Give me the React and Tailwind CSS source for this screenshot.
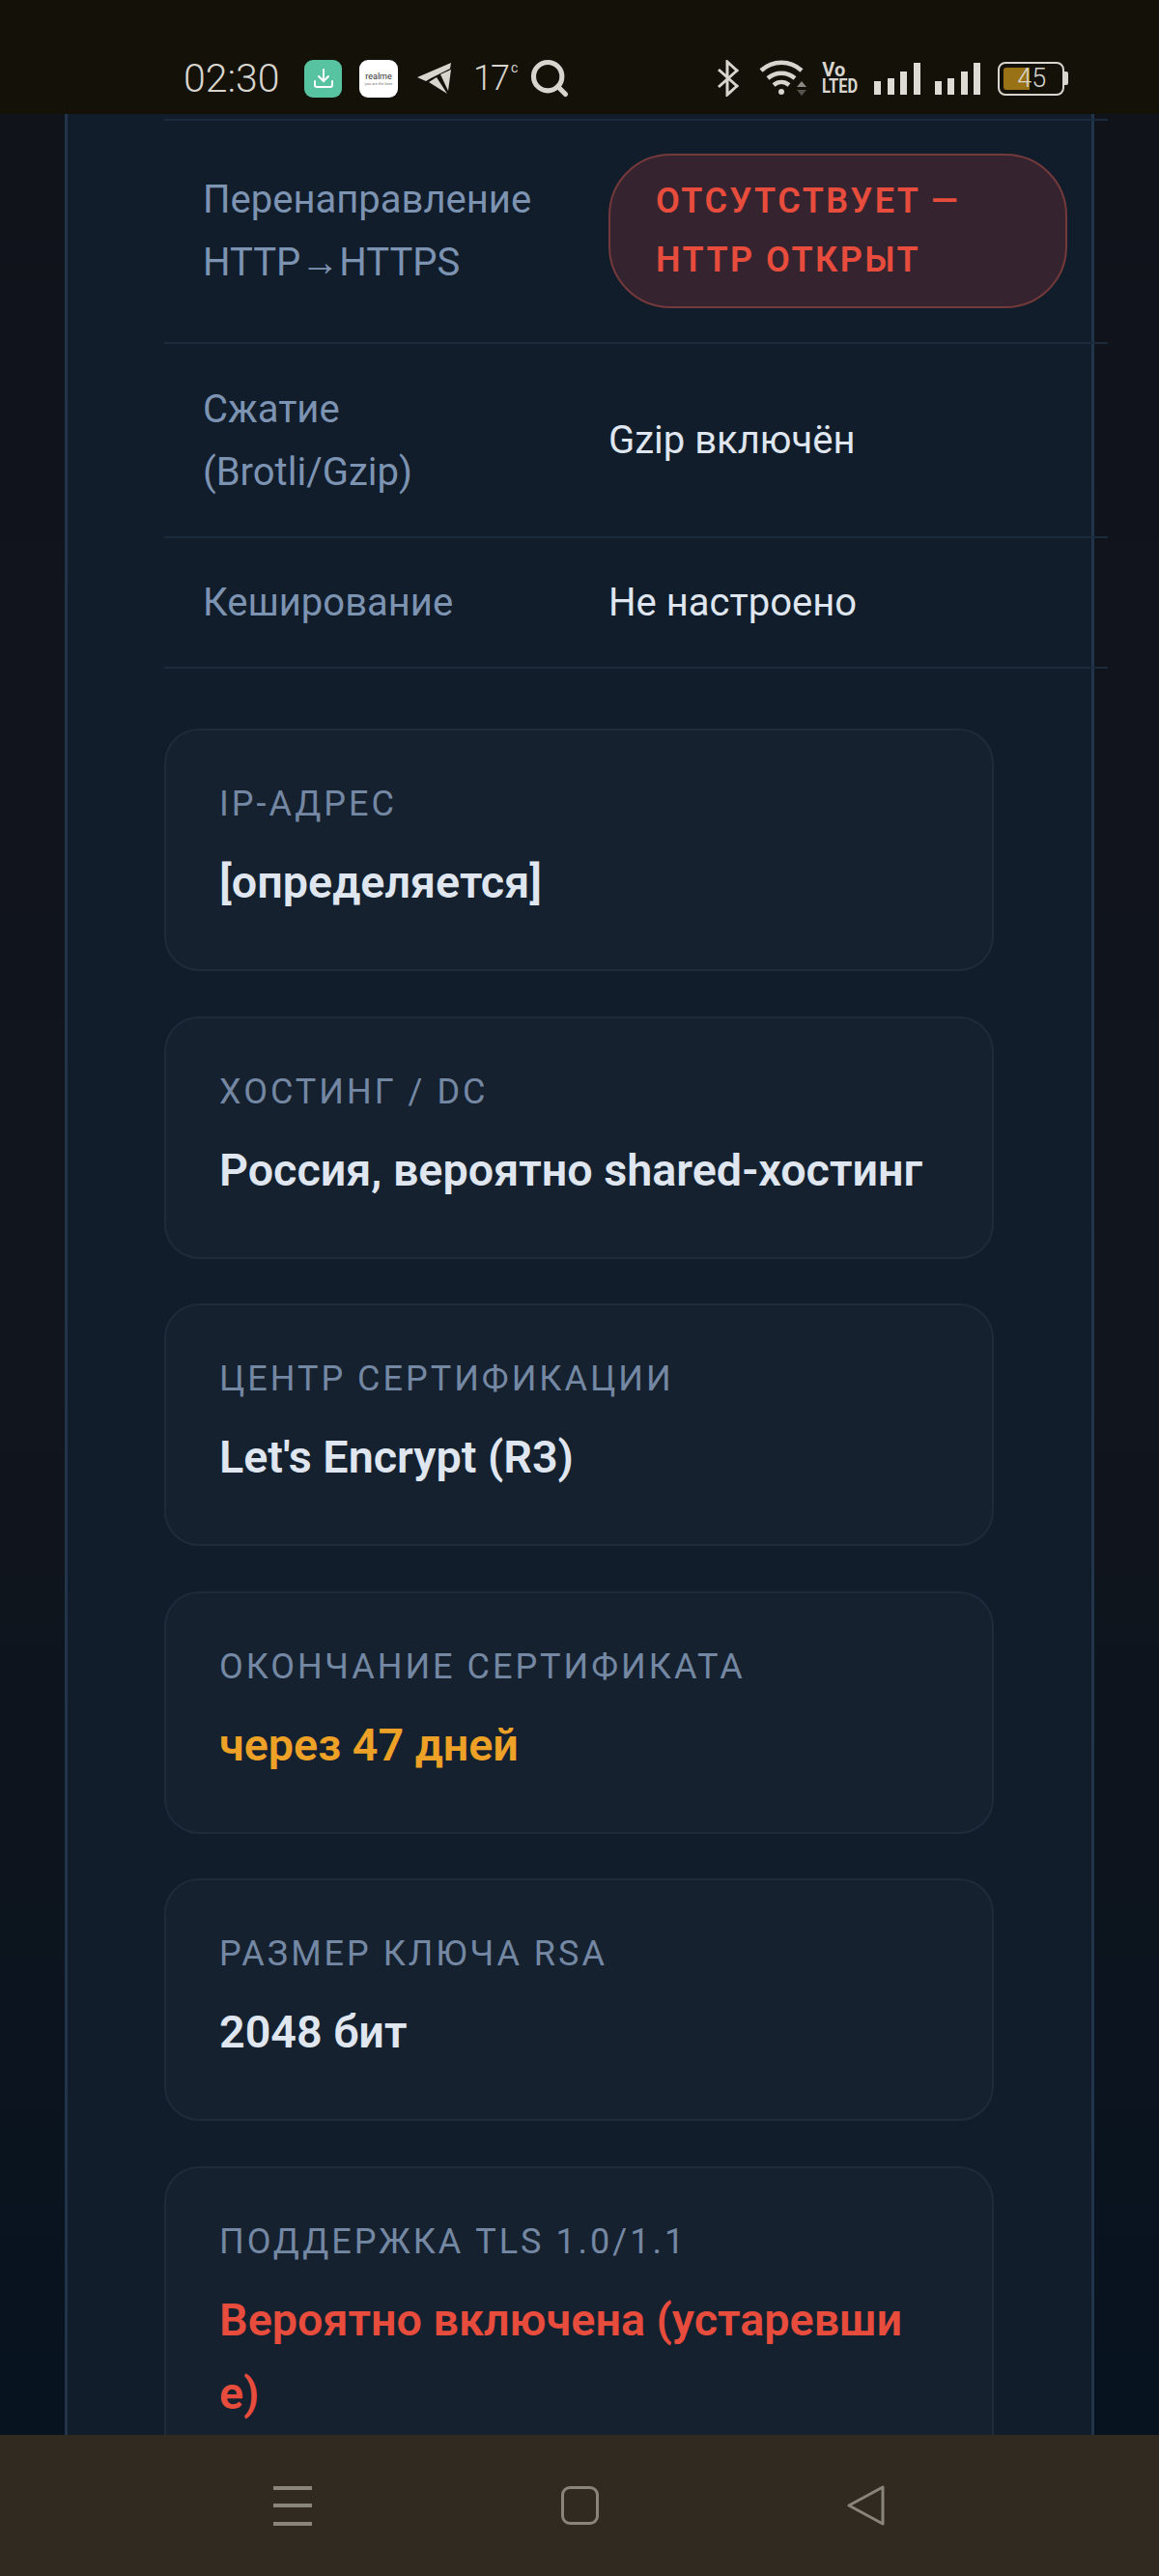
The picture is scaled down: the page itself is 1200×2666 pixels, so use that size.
import { Search, Download } from 'lucide-react'

const rowLabel = 'w-[460px] shrink-0 pl-[40px] pr-[60px] text-[40px] leading-[65px] text-[#7d93b2]'
const rowValue = 'text-[40px] leading-[65px] text-[#dfe6ef]'

const cards = [
  { label: 'IP-адрес', value: '[определяется]', color: 'text-[#dfe6ef]' },
  { label: 'Хостинг / DC', value: 'Россия, вероятно shared-хостинг', color: 'text-[#dfe6ef]' },
  { label: 'Центр сертификации', value: "Let's Encrypt (R3)", color: 'text-[#dfe6ef]' },
  { label: 'Окончание сертификата', value: 'через 47 дней', color: 'text-[#eda126]' },
  { label: 'Размер ключа RSA', value: '2048 бит', color: 'text-[#dfe6ef]' },
  { label: 'Поддержка TLS 1.0/1.1', value: 'Вероятно включена (устаревшие)', color: 'text-[#e74c3c]' },
]

function Bars() {
  return (
    <div className="flex items-end gap-[6.5px]">
      <span className="h-[14px] w-[7px] bg-[#dedbd5]" />
      <span className="h-[17px] w-[7px] bg-[#dedbd5]" />
      <span className="h-[24px] w-[7px] bg-[#dedbd5]" />
      <span className="h-[33px] w-[7px] bg-[#dedbd5]" />
    </div>
  )
}

function StatusBar() {
  return (
    <div className="flex h-[118px] shrink-0 items-center bg-[#141109] pt-[44px] pl-[190px] text-[#d8d5ce]">
      <span className="w-[125px] text-[41px] leading-none font-light">02:30</span>
      <div className="flex h-[39px] w-[39px] items-center justify-center rounded-[9px] bg-[#58c3a0]">
        <Download size={24} color="#ffffff" />
      </div>
      <div className="ml-[18px] flex h-[39px] w-[40px] flex-col items-center justify-center rounded-[9px] bg-white text-[#333333]">
        <span className="text-[9px] leading-[10px]">realme</span>
        <span className="text-[4px] leading-[5px] text-[#777777]">you are the best</span>
      </div>
      <svg className="ml-[20px]" width="36" height="32" viewBox="0 0 36 32" fill="#d8d5ce">
        <path d="M0 15 L35 0 L34 6 L14 16 L9 19 Z" />
        <path d="M12 20 L20 15 L31 32 Z" />
        <path d="M24 12 L35 7 L32 29 Z" />
      </svg>
      <span className="ml-[22px] text-[36px] leading-none font-light tracking-[-2px]">17</span>
      <span className="mb-[22px] ml-[3px] text-[14px] leading-none">c</span>
      <Search className="ml-[11px]" size={44} strokeWidth={2.8} />

      <svg className="ml-[151px]" width="24" height="38" viewBox="0 0 24 38" fill="none" stroke="#d8d5ce" strokeWidth="3">
        <path d="M2 10 L21 27 L11 36 V2 L21 11 L2 28" />
      </svg>
      <svg className="ml-[20px]" width="52" height="38" viewBox="0 0 52 38" fill="none" stroke="#d8d5ce" strokeWidth="4.5">
        <path d="M2 11 C14 0 32 0 44 11" />
        <path d="M9 19 C17 12 29 12 37 19" />
        <path d="M15 26 C20 22 26 22 31 26" />
        <circle cx="23" cy="33" r="3" fill="#d8d5ce" stroke="none" />
        <path d="M39 28 L44 22 L49 28 Z" fill="#8b8984" stroke="none" />
        <path d="M39 31 L44 37 L49 31 Z" fill="#55534e" stroke="none" />
      </svg>
      <div className="ml-[13px] flex w-[40px] flex-col font-bold">
        <span className="text-[20px] leading-[17px]">Vo</span>
        <span className="origin-left scale-x-[0.82] text-[20px] leading-[17px]">LTED</span>
      </div>
      <div className="ml-[14px]"><Bars /></div>
      <div className="ml-[15px]"><Bars /></div>
      <div className="ml-[18px] flex items-center">
        <div className="relative h-[35px] w-[69px] rounded-[8px] border-[2px] border-[#d8d5ce] p-[4px]">
          <div className="h-full w-[27px] rounded-l-[3px] bg-[#9a7216]" />
          <span className="absolute top-0 left-[18px] text-[27px] leading-[31px] font-light">45</span>
        </div>
        <span className="h-[14px] w-[4px] rounded-r-[2px] bg-[#d8d5ce]" />
      </div>
    </div>
  )
}

function NavBar() {
  return (
    <div className="flex h-[146px] shrink-0 items-center bg-[#312a20]">
      <div className="ml-[283px] flex w-[40px] flex-col gap-[14.5px]">
        <span className="h-[4px] bg-[#8a857a]" />
        <span className="h-[4px] bg-[#8a857a]" />
        <span className="h-[4px] bg-[#8a857a]" />
      </div>
      <div className="ml-[258px] h-[40px] w-[39px] rounded-[9px] border-[3px] border-[#8a857a]" />
      <svg className="ml-[257px]" width="40" height="42" viewBox="0 0 40 42" fill="none" stroke="#8a857a" strokeWidth="3" strokeLinejoin="round">
        <path d="M37 2 V40 L2 21 Z" />
      </svg>
    </div>
  )
}

export default function App() {
  return (
    <div className="flex h-[2666px] w-[1200px] flex-col overflow-hidden font-['Roboto',sans-serif]">
      <StatusBar />
      <div className="min-h-0 flex-1 bg-gradient-to-b from-[#10131a] via-[#11151d] via-55% to-[#07131f] px-[67px]">
        <div className="h-full border-x-[3px] border-[#22344a] bg-[#111d2b] pt-[5px] pl-[100px]">
          <div className="w-[977px]">
            <div className="flex h-[233px] items-center border-y-[2px] border-[#1c2b3c] pb-[2px]">
              <div className={rowLabel}>Перенаправление HTTP→HTTPS</div>
              <div className="w-[475px] rounded-[64px] border-[2px] border-[#74393a] bg-[#35242f] px-[47px] py-[17px] text-[36px] leading-[61px] font-semibold tracking-[2.5px] text-[#e74c3c] uppercase">
                Отсутствует — HTTP открыт
              </div>
            </div>
            <div className="flex h-[201px] items-center border-b-[2px] border-[#1c2b3c]">
              <div className={rowLabel}>Сжатие (Brotli/Gzip)</div>
              <div className={rowValue}>Gzip включён</div>
            </div>
            <div className="flex h-[135px] items-center border-b-[2px] border-[#1c2b3c]">
              <div className={rowLabel}>Кеширование</div>
              <div className={rowValue}>Не настроено</div>
            </div>
          </div>
          <div className="mt-[62px] flex w-[859px] flex-col gap-[46.6px]">
            {cards.map((card) => (
              <div key={card.label} className="rounded-[36px] border-[2px] border-[#1e2b3b] bg-[#162130] px-[55px] pt-[50px] pb-[52px]">
                <div className="text-[36px] leading-[52px] tracking-[3px] text-[#7488a3] uppercase">{card.label}</div>
                <div className={`mt-[17px] text-[46.7px] leading-[76px] font-semibold break-all ${card.color}`}>{card.value}</div>
              </div>
            ))}
          </div>
        </div>
      </div>
      <NavBar />
    </div>
  )
}
